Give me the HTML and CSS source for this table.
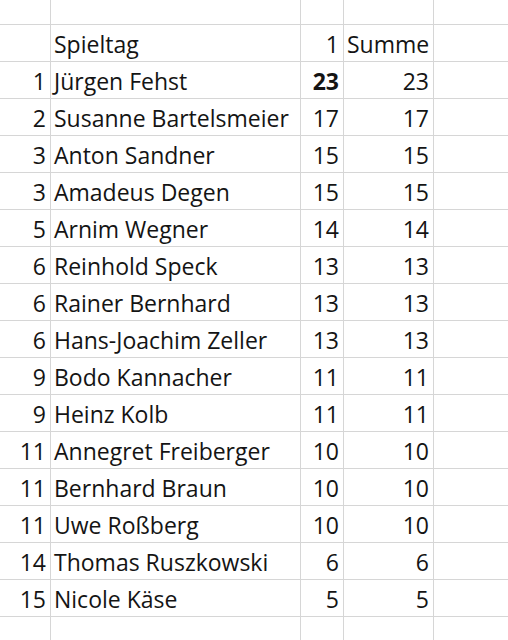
FILE: index.html
```html
<!DOCTYPE html>
<html lang="de">
<head>
<meta charset="utf-8">
<link rel="stylesheet" href="styles.css">
</head>
<body>
<table class="sheet">
  <colgroup>
    <col class="c-a"><col class="c-b"><col class="c-c"><col class="c-d"><col class="c-e">
  </colgroup>
  <tr class="r-top"><td></td><td></td><td></td><td></td><td></td></tr>
  <tr><td></td><td class="txt">Spieltag</td><td class="num">1</td><td class="txt">Summe</td><td></td></tr>
  <tr><td class="num">1</td><td class="txt">Jürgen Fehst</td><td class="num bold">23</td><td class="num">23</td><td></td></tr>
  <tr><td class="num">2</td><td class="txt">Susanne Bartelsmeier</td><td class="num">17</td><td class="num">17</td><td></td></tr>
  <tr><td class="num">3</td><td class="txt">Anton Sandner</td><td class="num">15</td><td class="num">15</td><td></td></tr>
  <tr><td class="num">3</td><td class="txt">Amadeus Degen</td><td class="num">15</td><td class="num">15</td><td></td></tr>
  <tr><td class="num">5</td><td class="txt">Arnim Wegner</td><td class="num">14</td><td class="num">14</td><td></td></tr>
  <tr><td class="num">6</td><td class="txt">Reinhold Speck</td><td class="num">13</td><td class="num">13</td><td></td></tr>
  <tr><td class="num">6</td><td class="txt">Rainer Bernhard</td><td class="num">13</td><td class="num">13</td><td></td></tr>
  <tr><td class="num">6</td><td class="txt">Hans-Joachim Zeller</td><td class="num">13</td><td class="num">13</td><td></td></tr>
  <tr><td class="num">9</td><td class="txt">Bodo Kannacher</td><td class="num">11</td><td class="num">11</td><td></td></tr>
  <tr><td class="num">9</td><td class="txt">Heinz Kolb</td><td class="num">11</td><td class="num">11</td><td></td></tr>
  <tr><td class="num">11</td><td class="txt">Annegret Freiberger</td><td class="num">10</td><td class="num">10</td><td></td></tr>
  <tr><td class="num">11</td><td class="txt">Bernhard Braun</td><td class="num">10</td><td class="num">10</td><td></td></tr>
  <tr><td class="num">11</td><td class="txt">Uwe Roßberg</td><td class="num">10</td><td class="num">10</td><td></td></tr>
  <tr><td class="num">14</td><td class="txt">Thomas Ruszkowski</td><td class="num">6</td><td class="num">6</td><td></td></tr>
  <tr><td class="num">15</td><td class="txt">Nicole Käse</td><td class="num">5</td><td class="num">5</td><td></td></tr>
  <tr><td></td><td></td><td></td><td></td><td></td></tr>
</table>
</body>
</html>
```

FILE: styles.css
```css
html, body {
  margin: 0;
  padding: 0;
  background: #ffffff;
  overflow: hidden;
}
.sheet {
  border-collapse: separate;
  border-spacing: 0;
  table-layout: fixed;
  width: 509px;
  font-family: "Open Sans", "Liberation Sans", sans-serif;
  font-size: 23px;
  line-height: 22px;
  color: #141414;
}
.c-a { width: 51px; }
.c-b { width: 250px; }
.c-c { width: 43px; }
.c-d { width: 90px; }
.c-e { width: 75px; }
.sheet tr { height: 37px; }
.sheet tr.r-top { height: 25px; }
.sheet td {
  border-right: 1px solid #d6d6d6;
  border-bottom: 1px solid #d6d6d6;
  padding: 0 4px 6px 3px;
  vertical-align: bottom;
  white-space: nowrap;
  overflow: hidden;
}
.sheet td.num { text-align: right; }
.sheet td.txt { text-align: left; }
.sheet td.bold { font-weight: 700; }
```
